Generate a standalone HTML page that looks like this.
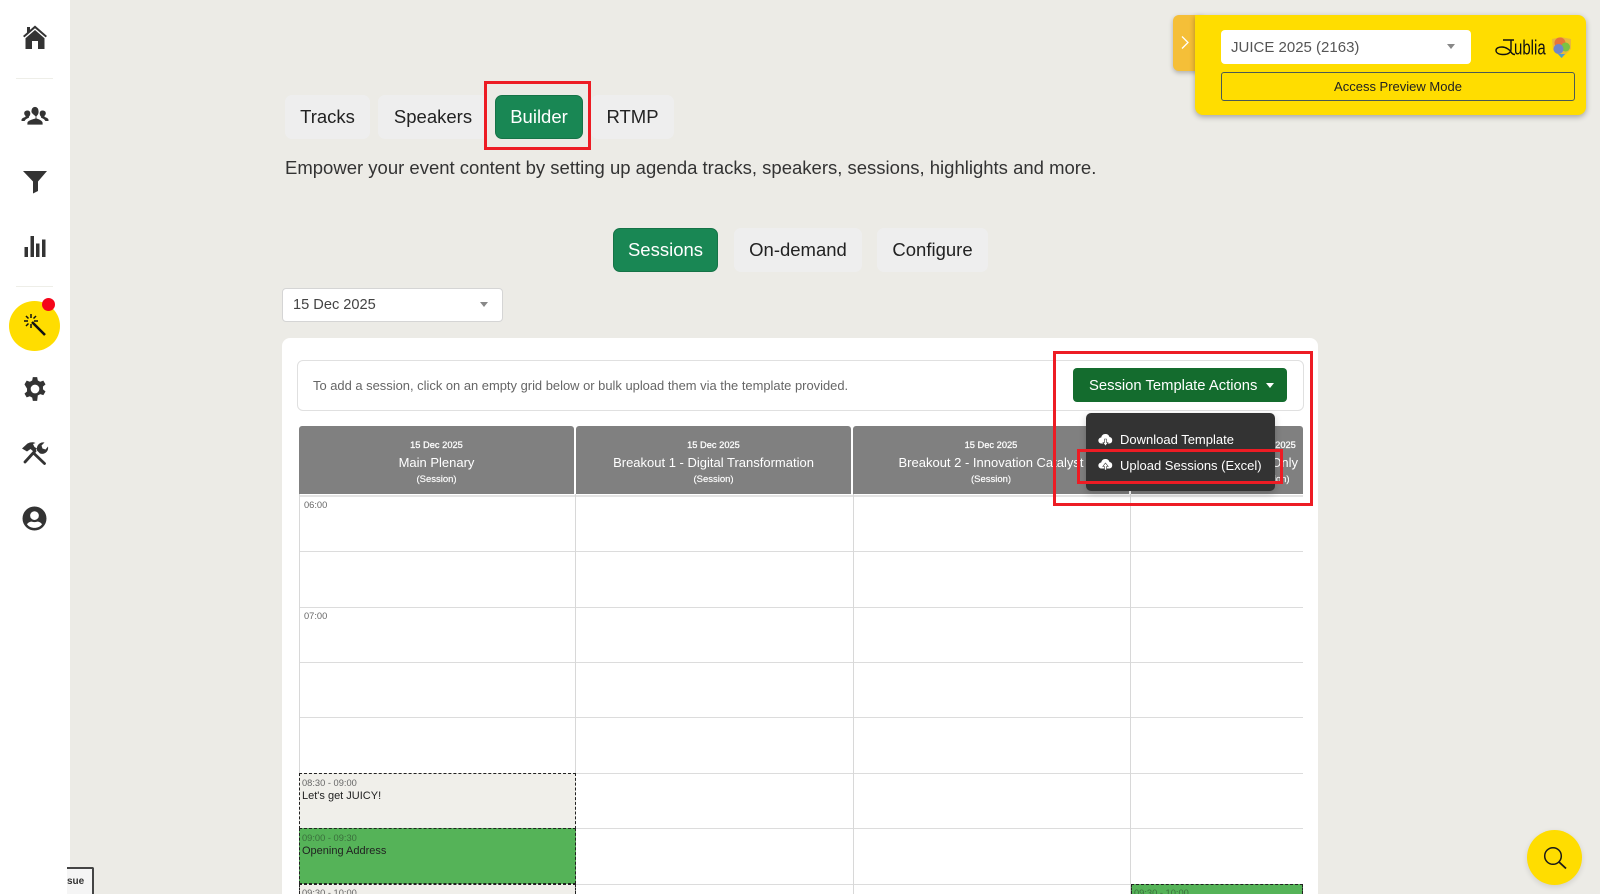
<!DOCTYPE html>
<html lang="en"><head><meta charset="utf-8"><title>Builder</title>
<style>
html,body{margin:0;padding:0;width:1600px;height:894px;overflow:hidden}
body{background:#ecebe6;font-family:"Liberation Sans",sans-serif;color:#212529}
#w{position:absolute;left:0;top:0;width:1600px;height:894px;overflow:hidden;background:#ecebe6}
.a{position:absolute;box-sizing:border-box}
.tab{position:absolute;box-sizing:border-box;height:44px;top:95px;border-radius:7px;background:#eeeeee;font-size:18.500px;line-height:44px;text-align:center;color:#222;white-space:nowrap}
.on{background:#198754;color:#fff;border:1px solid #157347;line-height:42px}
.red{position:absolute;box-sizing:border-box;border:3px solid #ed1c24}
.hd{position:absolute;box-sizing:border-box;top:426px;height:68px;background:#808080;color:#fff;text-align:center;border-radius:3px 3px 0 0}
.hd .d{position:absolute;left:0;right:0;top:13px;font-size:9.300px;line-height:12px;-webkit-text-stroke:.25px #fff}
.hd .t{position:absolute;left:0;right:0;top:29px;font-size:13px;line-height:16px;white-space:nowrap}
.hd .s{position:absolute;left:0;right:0;top:48px;font-size:9.500px;line-height:12px;-webkit-text-stroke:.15px #fff}
.h{position:absolute;left:299px;width:1004px;height:1px;background:#dcdcdc}
.v{position:absolute;top:494px;height:400px;width:1px;background:#d8d8d8}
.tm{position:absolute;left:304px;font-size:9.300px;line-height:11px;color:#666}
.ev{position:absolute;box-sizing:border-box;left:299px;width:277px;height:56px;border:1px dashed #222;background:#f0efea;padding:4px 2px;overflow:hidden}
.ev .p{font-size:9.300px;line-height:11px;color:#666}
.ev .n{font-size:11px;line-height:14px;color:#222}
.g{background:#55b358}
.ic{position:absolute;fill:#333}
</style></head><body><div id="w">

<!-- sidebar -->
<div class="a" style="left:0;top:0;width:70px;height:894px;background:#fff"></div>
<div class="a" style="left:16px;top:78px;width:37px;height:1px;background:#eeeee8"></div>
<div class="a" style="left:16px;top:286px;width:37px;height:1px;background:#eeeee8"></div>

<svg class="ic" style="left:22px;top:24px" width="26" height="26" viewBox="0 0 26 26"><path d="M13 1.500 L25 12 L23.600 13.400 L13 4.200 L2.400 13.400 L1 12 L5 8.500 V3 H8 V5.900Z"/><path d="M13 6 L22.500 14.200 V25 H16 V17 H10 V25 H3.500 V14.200Z"/></svg>
<svg class="ic" style="left:21px;top:106px" width="28" height="20" viewBox="0 0 28 20"><path d="M6.500 4.500c1.900 0 2.800 1.300 2.800 3 0 1.400-.6 2.600-1.400 3.300v1c-1.500.6-3.400 1.400-4.300 3.200H.5v-1.300c.4-1.600 2.500-2.200 4-2.800v-1c-.9-.7-1.300-1.700-1.300-2.600 0-1.700 1.200-2.800 3.300-2.800zM21.500 4.500c2.100 0 3.300 1.100 3.300 2.800 0 .9-.4 1.900-1.300 2.600v1c1.500.6 3.600 1.200 4 2.800V15h-3.100c-.9-1.800-2.800-2.600-4.300-3.200v-1c-.8-.7-1.400-1.900-1.400-3.300 0-1.700.9-3 2.800-3z"/><path stroke="#fff" stroke-width=".8" d="M14 .5c2.700 0 4 2.400 4 5 0 2-.9 3.900-2.200 4.900v1.700c2.500.9 5.600 1.900 6.200 4.400v2.500H6v-2.500c.6-2.500 5.700-3.500 8.200-4.400v-1.700C12.900 9.400 10 7.500 10 5.500 10 2.900 11.300.5 14 .5z"/></svg>
<svg class="ic" style="left:22px;top:170px" width="26" height="24" viewBox="0 0 26 24"><path d="M1 1 H25 L16 11.500 V21 L11 23.500 V11.500Z"/></svg>
<svg class="ic" style="left:23px;top:234px" width="24" height="24" viewBox="0 0 24 24"><rect x="1.500" y="13" width="3.500" height="10"/><rect x="7.500" y="2" width="3.500" height="21"/><rect x="13" y="9.500" width="3.500" height="13.500"/><rect x="19" y="5.500" width="3.500" height="17.500"/></svg>

<div class="a" style="left:9px;top:301px;width:51px;height:50px;border-radius:50%;background:#ffdd00"></div>
<div class="a" style="left:42px;top:298px;width:13px;height:13px;border-radius:50%;background:#f5051a"></div>
<svg class="a" style="left:23px;top:313px" width="24" height="24" viewBox="0 0 24 24"><path d="M9 9 L22 22" stroke="#111" stroke-width="2.600" fill="none"/><path d="M8 1v4M8 11v4M1 8h4M11 8h4M3 3l2.500 2.500M13 3l-2.500 2.500M3 13l2.500-2.500" stroke="#111" stroke-width="1.500" fill="none"/></svg>

<svg class="ic" style="left:22px;top:376px" width="26" height="26" viewBox="0 0 24 24"><path fill-rule="evenodd" d="M10 1h4l.6 3.100c.8.300 1.500.7 2.100 1.200l3-1 2 3.400-2.400 2.100c.1.800.1 1.600 0 2.400l2.400 2.100-2 3.400-3-1c-.6.500-1.300.9-2.100 1.200L14 23h-4l-.6-3.100c-.8-.3-1.500-.7-2.100-1.200l-3 1-2-3.400 2.400-2.100c-.1-.8-.1-1.600 0-2.400L2.300 7.700l2-3.400 3 1c.6-.5 1.300-.9 2.100-1.200zM12 8a4 4 0 1 0 0 8 4 4 0 0 0 0-8z"/></svg>
<svg class="a" style="left:21px;top:441px" width="28" height="25" viewBox="0 0 28 25"><path d="M14 10 L4 21" stroke="#333" stroke-width="2.800" fill="none" stroke-linecap="round"/><path d="M1 7.500 L6.500 2.500 C9.500 .8 13 1 14.500 2 L12 3 L13.500 6 L16 7.500 L13 11 L9.500 8 L6 10.500Z" fill="#333"/><path d="M12.500 12 L23.500 22.500" stroke="#333" stroke-width="2.800" fill="none" stroke-linecap="round"/><path d="M16 9.500 C15 5 18.500 .5 23.500 1.500 L20.500 4.500 L21.500 7.500 L24.500 8.500 L27 5.500 C28 10.500 23.500 14 19 12.500Z" fill="#333"/></svg>
<svg class="ic" style="left:22px;top:506px" width="25" height="25" viewBox="0 0 24 24"><path fill-rule="evenodd" d="M12 .5a11.500 11.500 0 1 0 0 23 11.500 11.500 0 0 0 0-23zM12 5a4.200 4.200 0 1 1 0 8.400A4.200 4.200 0 0 1 12 5zM12 21c-2.900 0-5.500-1.300-7.200-3.400 1-1.800 3-2.600 4.500-2.600.9.300 1.800.5 2.700.5s1.800-.2 2.700-.5c1.500 0 3.500.8 4.500 2.600C17.500 19.700 14.900 21 12 21z"/></svg>

<!-- top tabs -->
<div class="tab" style="left:285px;width:85px">Tracks</div>
<div class="tab" style="left:378px;width:110px">Speakers</div>
<div class="tab on" style="left:495px;width:88px">Builder</div>
<div class="tab" style="left:591px;width:83px">RTMP</div>
<div class="red" style="left:484px;top:81px;width:107px;height:69px"></div>
<div class="a" style="left:285px;top:156px;font-size:18.500px;line-height:24px;color:#333;white-space:nowrap">Empower your event content by setting up agenda tracks, speakers, sessions, highlights and more.</div>

<!-- sub tabs -->
<div class="tab on" style="left:613px;top:228px;width:105px">Sessions</div>
<div class="tab" style="left:734px;top:228px;width:128px">On-demand</div>
<div class="tab" style="left:877px;top:228px;width:111px">Configure</div>

<!-- date select -->
<div class="a" style="left:282px;top:288px;width:221px;height:34px;background:#fff;border:1px solid #d5d5d5;border-radius:4px;font-size:14.600px;line-height:33px;padding-left:10px;color:#444">15 Dec 2025</div>
<div class="a" style="left:480px;top:302px;width:0;height:0;border:4px solid transparent;border-top:5px solid #888;border-bottom:0"></div>

<!-- card -->
<div class="a" style="left:282px;top:338px;width:1036px;height:556px;background:#fff;border-radius:8px 8px 0 0"></div>
<div class="a" style="left:297px;top:360px;width:1007px;height:51px;border:1px solid #e0e0e0;border-radius:6px;background:#fff;font-size:12.930px;line-height:50px;padding-left:15px;color:#666;white-space:nowrap">To add a session, click on an empty grid below or bulk upload them via the template provided.</div>

<!-- grid lines -->
<div class="h" style="top:551px"></div><div class="h" style="top:607px"></div><div class="h" style="top:662px"></div><div class="h" style="top:717px"></div><div class="h" style="top:773px"></div><div class="h" style="top:828px"></div><div class="h" style="top:884px"></div>
<div class="a" style="left:299px;top:495px;width:1004px;height:2px;background:#e4e4e4"></div>
<div class="v" style="left:299px"></div><div class="v" style="left:575px"></div><div class="v" style="left:853px"></div><div class="v" style="left:1130px"></div>
<div class="tm" style="top:500px">06:00</div><div class="tm" style="top:611px">07:00</div>

<!-- headers -->
<div class="hd" style="left:299px;width:275px"><div class="d">15 Dec 2025</div><div class="t">Main Plenary</div><div class="s">(Session)</div></div>
<div class="hd" style="left:576px;width:275px"><div class="d">15 Dec 2025</div><div class="t">Breakout 1 - Digital Transformation</div><div class="s">(Session)</div></div>
<div class="hd" style="left:853px;width:276px"><div class="d">15 Dec 2025</div><div class="t">Breakout 2 - Innovation Catalyst</div><div class="s">(Session)</div></div>
<div class="hd" style="left:1131px;width:172px;overflow:hidden"><div class="d" style="right:auto;width:277px">15 Dec 2025</div><div class="t" style="text-align:right;right:5px;left:auto">Only</div><div class="s" style="right:auto;width:277px">(Session)</div></div>

<!-- events -->
<div class="ev" style="top:773px"><div class="p">08:30 - 09:00</div><div class="n">Let's get JUICY!</div></div>
<div class="ev g" style="top:828px"><div class="p" style="color:#3a6f3c">09:00 - 09:30</div><div class="n">Opening Address</div></div>
<div class="ev" style="top:884px;height:10px;border-bottom:0"><div class="p" style="line-height:9px">09:30 - 10:00</div></div>
<div class="ev g" style="top:884px;left:1131px;width:172px;height:10px;border-bottom:0"><div class="p" style="color:#3a6f3c;line-height:9px">09:30 - 10:00</div></div>

<!-- template button + dropdown -->
<div class="a" style="left:1073px;top:368px;width:214px;height:34px;background:#146c2e;border-radius:4px;color:#fff;font-size:14.800px;line-height:36px;padding-left:16px;white-space:nowrap">Session Template Actions</div>
<div class="a" style="left:1266px;top:383px;width:0;height:0;border:4px solid transparent;border-top:5px solid #fff;border-bottom:0"></div>
<div class="a" style="left:1086px;top:413px;width:189px;height:78px;background:#333;border-radius:5px;box-shadow:0 3px 8px rgba(0,0,0,.2)"></div>
<svg class="a" style="left:1098px;top:433px" width="15" height="13" viewBox="0 0 15 13"><path d="M3.500 10.500a3 3 0 0 1-.3-6A4.300 4.300 0 0 1 11.500 4a3.300 3.300 0 0 1 0 6.500z" fill="#fff"/><path d="M7.500 13 L5 9.500h1.600V6h1.800v3.500H10z" fill="#fff" stroke="#333" stroke-width=".6"/></svg>
<div class="a" style="left:1120px;top:431px;color:#fff;font-size:13px;line-height:17px;white-space:nowrap">Download Template</div>
<svg class="a" style="left:1098px;top:458px" width="15" height="13" viewBox="0 0 15 13"><path d="M3.500 10.500a3 3 0 0 1-.3-6A4.300 4.300 0 0 1 11.500 4a3.300 3.300 0 0 1 0 6.500z" fill="#fff"/><path d="M7.500 5 L10.200 8.500H8.500V12H6.500V8.500H4.800z" fill="#fff" stroke="#333" stroke-width=".6"/></svg>
<div class="a" style="left:1120px;top:457px;color:#fff;font-size:13px;line-height:17px;white-space:nowrap">Upload Sessions (Excel)</div>
<div class="red" style="left:1053px;top:351px;width:260px;height:155px"></div>
<div class="red" style="left:1077px;top:449px;width:206px;height:35px"></div>

<!-- preview panel -->
<div class="a" style="left:1173px;top:15px;width:30px;height:56px;background:#f5bf38;border-radius:6px 0 0 6px;box-shadow:0 2px 5px rgba(0,0,0,.25)"></div>
<svg class="a" style="left:1180px;top:35px" width="10" height="15" viewBox="0 0 10 15"><path d="M2 1.500 L8 7.500 L2 13.500" fill="none" stroke="#fff" stroke-width="1.300"/></svg>
<div class="a" style="left:1195px;top:15px;width:391px;height:100px;background:#ffdd00;border-radius:0 8px 8px 8px;box-shadow:0 2px 6px rgba(0,0,0,.3)"></div>
<div class="a" style="left:1221px;top:30px;width:250px;height:34px;background:#fff;border-radius:4px;font-size:15px;line-height:36px;padding-left:10px;color:#555">JUICE 2025 (2163)</div>
<div class="a" style="left:1447px;top:44px;width:0;height:0;border:4px solid transparent;border-top:5px solid #888;border-bottom:0"></div>
<div class="a" style="left:1221px;top:72px;width:354px;height:29px;border:1px solid #4a5a55;border-radius:3px;font-size:13px;line-height:27px;text-align:center;color:#222">Access Preview Mode</div>
<svg class="a" style="left:1490px;top:32px" width="62" height="28" viewBox="1490 32 62 28"><text transform="translate(1514 54.500) scale(1 1.350)" font-family="Liberation Sans" font-size="15" fill="#111">ublia</text><path d="M1503 40H1514M1511 40V49C1511 52.500 1508 54.500 1504 54.500C1499 54.500 1496 53 1496 50.500C1496 48 1499 47 1502 47C1506 47 1510 50 1511 52C1512 54 1513 54.500 1515 54.500" fill="none" stroke="#111" stroke-width="1.400"/></svg>
<svg class="a" style="left:1551px;top:36px" width="21" height="23" viewBox="0 0 21 23"><path d="M1 3 L10 1 L20 3 V13 L11 22 L2 14Z" fill="#e9b93c"/><circle cx="9" cy="7" r="5.500" fill="#e8743b"/><circle cx="14.500" cy="11" r="4.500" fill="#7cc242"/><circle cx="7.500" cy="13" r="5" fill="#6f86c9"/><path d="M7 18 L14 18 L10.500 22Z" fill="#4da0c8"/></svg>

<!-- issue tag -->
<div class="a" style="left:67px;top:867px;width:27px;height:27px;background:#f5f5f5;border:2px solid #444;border-left:0;border-bottom:0;border-radius:0 2px 0 0;font-size:10px;line-height:26px;font-weight:700;color:#333;text-align:left">sue</div>

<!-- search fab -->
<div class="a" style="left:1527px;top:830px;width:55px;height:55px;border-radius:50%;background:#ffdd00;box-shadow:0 2px 6px rgba(0,0,0,.12)"></div>
<svg class="a" style="left:1542px;top:845px" width="26" height="26" viewBox="0 0 26 26"><circle cx="11" cy="11" r="8.300" fill="none" stroke="#1a1a1a" stroke-width="1.500"/><path d="M17 17 L24 23.500" stroke="#1a1a1a" stroke-width="1.800"/></svg>

</div></body></html>
